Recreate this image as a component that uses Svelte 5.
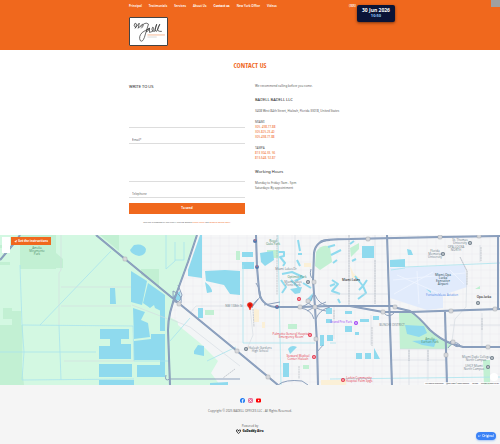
<script>
  const nav = ["Principal", "Testimonials", "Services", "About Us", "Contact us", "New York Office", "Videos"];
  const miami = ["305. 498.77.88", "305.825.23.40", "305.498.77.88"];
  const tampa = ["813 304.33. 56", "813.648. 92.87"];

  const highways = [
    "M197 0L188 27L177 57Q168 78 168 95L170 150",
    "M96 0L125 24L170 61L237 116L278 150",
    "M256 0L257 32L259 55Q260 70 275 72L300 72L330 71L393 71",
    "M350 71L383 77L410 77L500 74",
    "M393 72L410 76Q418 81 430 95Q440 104 450 108L463 112L500 112",
    "M330 5Q316 5 314 18L313 45L315 72L317 108L318 150",
    "M387 0L389 62L392 150",
    "M320 7Q324 4 350 4L440 2L500 1",
    "M445 77L447 150",
    "M498 0L498 75",
    "M0 25L16 6L20 0"
  ];

  const ramps = [
    "M256 48Q262 58 260 62L252 72M258 64Q253 68 252 73M264 70L280 67",
    "M300 72Q311 70 313 60M315 60Q319 70 330 71M300 73Q311 74 314 84M316 84Q319 75 330 72M307 67Q315 74 326 76M307 76Q318 70 326 67",
    "M311 34Q309 41 313 44M317 117Q324 109 322 111",
    "M173 56Q183 60 181 68Q172 70 173 56M178 50L182 60Q180 70 172 66",
    "M166 140Q164 147 170 144L240 144M278 150Q285 144 302 146L308 150",
    "M384 78Q389 84 395 77M450 106Q457 115 460 110Q454 104 448 113"
  ];

  const water = [
    "M131 36L147 46L142 70L131 67Z",
    "M148 48L165 60V78L155 73L154 70L150 73L143 68Z",
    "M133 73L145 77L141 85L148 88L150 102L134 104Z",
    "M134 106L151 104V99H165V125H134Z",
    "M100 94H129V104H121V109H131V124H99V111H110V104H100Z",
    "M99 129H132V142H99ZM137 130H165V142H137ZM99 145H134V150H99Z",
    "M110 53H115L116 69H110Z",
    "M130 15L134 10Q143 8 146 14Q146 20 139 21Q131 19 130 15Z",
    "M200 0H202V43L188 41V35Z",
    "M205 36L225 35L240 36V60L230 59L224 50L206 46Z",
    "M205 47Q212 52 212 57L207 58Z",
    "M242 17H253V22H242ZM242 27H254V34H242Z",
    "M260 18L273 16L274 25L265 31L261 27Z",
    "M160 63H165V96H160ZM160 120H165V134H160Z",
    "M198 73H203V83H198Z",
    "M194 116L198 110L204 111V121L194 119Z",
    "M172 62L180 56L181 65L174 66Z",
    "M283 128H289V142H283ZM326 73H332V79H326ZM326 84H332V88H326Z",
    "M210 148L228 147V150H210ZM288 114Q291 109 297 112L290 119Z",
    "M290 54L302 52L300 58L295 59ZM306 65L313 58L312 66Z",
    "M362 11H374V23H362ZM407 14L411 15L413 20H408ZM390 25L405 24V32H390Z",
    "M356 118H362V124H356ZM365 118H371V124H365ZM374 113L380 124H374Z",
    "M345 76H352V79H345ZM360 84H369V87H360ZM373 81H379V85H373Z",
    "M320 100H324V111H320ZM327 100H333V106H327ZM345 91H352V97H345ZM355 97H359V100H355Z",
    "M405 90L424 91L427 98L419 102L407 99ZM412 106L437 104L434 112L422 110Z",
    "M426 54L431 56V58Z"
  ];

  const ponds = [
    "M278 17L284 17V21L280 22L285 28L283 31",
    "M298 5L300 16M298 19H302M297 25L300 31M282 39L292 37L303 42L295 46",
    "M281 45L286 52L282 58M291 45L300 54M303 48L311 53",
    "M328 12L335 10M331 20L341 15M333 28L337 25M350 9L354 6M352 26L356 24",
    "M332 45L338 49L332 56L340 59M335 49L330 51M338 64L340 68",
    "M355 41L363 51L359 55M363 51L366 58L358 64M363 51L367 45"
  ];

  const parks = [
    "M20 0H56V34H20ZM56 18L63 24V33H56Z",
    "M0 90L23 90L22 132L24 150H0Z",
    "M3 73H12V76H21V90H12V84H3ZM0 10H10V13H0ZM0 27H10V30H0Z",
    "M100 0H119V16ZM141 34H159V51L141 40Z",
    "M267 15H279V23H267ZM236 16H240V25H236ZM205 75H214V80H205Z",
    "M316 17Q322 8 330 12L332 27L320 35L315 31Z",
    "M350 13L359 8V14L351 22Z",
    "M399 78H413L430 95L452 110L447 114H400Z",
    "M288 89H297V94H288ZM475 54L480 51V54ZM483 125H490V150H484ZM303 130H309V134H303Z"
  ];

  const canals = "M20 30L22 90L133 91L134 126H168M22 90L24 117L22 145L134 144M59 90L61 145M0 117H96M111 16L40 90M166 0V34L175 26V7M243 30V108M278 0L281 150M243 108H315M405 32L500 28M391 35L405 33M330 108L336 108M330 144L500 142M184 7V25H175M170 106L190 83M207 126L236 112";

  const shields = [
    [125, 24], [179, 69], [237, 116], [268, 142], [300, 72], [308, 66], [314, 47], [315, 72], [316, 104],
    [368, 4], [440, 2], [479, 1], [395, 72], [383, 77], [451, 76], [495, 74], [453, 107], [446, 120], [488, 112]
  ];

  const places = [
    { x: 37, y: 14, lines: ["Amelia", "Miramonte", "Park"], tone: "green" },
    { x: 273, y: 7, lines: ["Royal", "Oaks Park"], tone: "green" },
    { x: 297, y: 43, lines: ["Optimist Park"], tone: "green" },
    { x: 293, y: 48, lines: ["Miami Lakes", "Picnic Park"], tone: "gray" },
    { x: 291, y: 100, lines: ["Palmetto General Hospital", "Emergency Room"], tone: "red" },
    { x: 298, y: 122, lines: ["Steward Medical", "Center Hialeah"], tone: "red" },
    { x: 260, y: 114, lines: ["Hialeah Gardens", "High School"], tone: "gray" },
    { x: 351, y: 46, lines: ["Miami Lakes"], tone: "dark" },
    { x: 341, y: 88, lines: ["Grand Prix Park"], tone: "purple" },
    { x: 359, y: 144, lines: ["Larkin Community", "Hospital Palm Spgs"], tone: "red" },
    { x: 460, y: 6, lines: ["St. Thomas", "University"], tone: "gray" },
    { x: 435, y: 17, lines: ["Florida", "Memorial", "University"], tone: "gray" },
    { x: 456, y: 13, lines: ["OPA-LOCKA", "NORTH"], tone: "gray" },
    { x: 443, y: 41, lines: ["Miami-Opa", "Locka", "Executive", "Airport"], tone: "slate" },
    { x: 442, y: 61, lines: ["Fontainebleau Aviation"], tone: "blue" },
    { x: 484, y: 63, lines: ["Opa-locka"], tone: "dark" },
    { x: 392, y: 91, lines: ["BUNCHE DISTRICT"], tone: "gray" },
    { x: 430, y: 105, lines: ["Amelia", "Earhart Park"], tone: "green" },
    { x: 476, y: 123, lines: ["Miami Dade College", "North Campus"], tone: "gray" },
    { x: 474, y: 132, lines: ["UHCF Miami", "North Campus"], tone: "gray" },
    { x: 234, y: 72, lines: ["NW 138th St"], tone: "gray" },
    { x: 286, y: 35, lines: ["Miami Lakes Dr"], tone: "gray" }
  ];

  const markers = [
    [299, 64, "red"], [310, 100, "red"], [314, 122, "red"], [343, 145, "red"], [356, 88, "purple"],
    [246, 114, "gray"], [308, 47, "gray"], [443, 19, "gray"], [470, 8, "gray"], [478, 68, "gray"], [492, 123, "gray"], [488, 132, "gray"]
  ];
</script>

<header class="site-header">
  <div class="wrap">
    <div class="top-row">
      <nav>
        {#each nav as item}
          <a href="#top" class:active={item === "Contact us"}>{item}</a>
        {/each}
      </nav>
      <a class="phone" href="#call">(305)</a>
    </div>
    <a class="logo" href="#top" aria-label="Badell">
      <svg viewBox="0 0 36 26">
        <path d="M5 9Q3 7 5 5Q7 5 6 8L5 10L9 5L8 10L12 6Q14 7 11 10M10 9Q15 3 18 6Q16 12 14 19Q12 24 10 22Q8 18 12 14Q15 12 19 10Q15 12 16 13.500Q18 13 19 10L19 14L22 13Q24 9 22 9Q20 13 24 13L26 6Q23 13 26 13L29 6Q25 13 29 13L31 13" />
        <path class="accent" d="M17 16.500H34" />
        <path class="thin" d="M17 18.500H26" />
      </svg>
    </a>
  </div>
  <div class="clock">
    <strong>30 Jun 2026</strong>
    <span>10:50</span>
  </div>
  <div class="corner"></div>
</header>

<main>
  <h1>CONTACT US</h1>
  <div class="wrap columns">
    <form>
      <h2>WRITE TO US</h2>
      <input class="name" aria-label="Name" />
      <input type="email" placeholder="Email*" aria-label="Email" />
      <textarea aria-label="Message"></textarea>
      <input type="tel" placeholder="Telephone" aria-label="Telephone" />
      <button type="button" class="send">To send</button>
      <p class="legal">
        This site is protected by reCAPTCHA and the Google <a href="#privacy">Privacy Policy</a> and <a href="#terms">Terms of Service apply.</a>
      </p>
    </form>

    <section class="info">
      <p>We recommend calling before you come.</p>
      <h2>BADELL BADELL LLC</h2>
      <p>3408 West 84th Street, Hialeah, Florida 33018, United States</p>
      <div class="phones">
        <p>MIAMI</p>
        {#each miami as number}
          <a href="#call">{number}</a>
        {/each}
      </div>
      <div class="phones">
        <p>TAMPA</p>
        {#each tampa as number}
          <a href="#call">{number}</a>
        {/each}
      </div>
      <h2>Working Hours</h2>
      <p>Monday to Friday: 9am - 5pm</p>
      <p>Saturdays: By appointment</p>
    </section>
  </div>
</main>

<section class="map">
  <svg viewBox="0 0 500 150" preserveAspectRatio="xMidYMid slice">
    <defs>
      <pattern id="streets" width="9" height="8" patternUnits="userSpaceOnUse">
        <path d="M0 3H9M4 0V8" stroke="#eaedf0" stroke-width=".5" />
      </pattern>
    </defs>
    <rect width="500" height="150" fill="#f5f6f7" />
    <rect width="500" height="150" fill="url(#streets)" />
    <path class="land" d="M0 0H197L188 27L177 57L169 82L190 92L214 112L230 126L235 135L220 150H0Z" />
    <path class="urban" d="M176 66L237 116L278 150H220L211 138L218 126L200 108L178 90Z" />
    <path class="airport" d="M390 33L465 30L467 52L443 60V73L427 75L390 63Z" />
    <path class="runway" d="M393 45L465 38M417 36L419 69M397 40L443 60M394 59L433 37M450 35L464 49" />
    {#each parks as d}
      <path class="park" {d} />
    {/each}
    <path class="sand" d="M304 28H311V32H304ZM254 73L259 75V87H254ZM262 87H265V93H262ZM350 31L354 39L360 43H352ZM321 145H346V150H321Z" />
    {#each water as d}
      <path class="water" {d} />
    {/each}
    {#each ponds as d}
      <path class="pond" {d} />
    {/each}
    <path class="canal" d={canals} />
    <path class="street" d="M61 0V35L59 38V90M61 52H131M61 71H131M64 126H134M132 70L168 84M190 78L196 71H250M250 72L253 100L247 114M170 84L190 92L240 131M295 0V35M349 0V70M375 0V69M334 71V104M371 80V110M460 22L467 36L466 72L455 84L452 106M480 10V27M482 78V112M409 114V150M428 114V145M400 114L450 114M330 59H388M392 125H445M450 90H500" />
    <path class="avenue" d="M277 0V60M253 74L254 92M349 0V70M375 25V69M334 75V84M372 92V111M460 22L467 36V50M481 12V26M482 83V95M299 131V144M235 134L223 143M409 115V126M428 115V126" />
    {#each highways as d}
      <path class="highway" {d} />
      <path class="highway-line" {d} />
    {/each}
    {#each ramps as d}
      <path class="ramp" {d} />
    {/each}
    {#each shields as [x, y]}
      <rect class="shield" x={x - 2} y={y - 2} width="4" height="4" rx="1" />
    {/each}
    {#each [[255, 6], [257, 32], [277, 72]] as [x, y]}
      <circle cx={x} cy={y} r="2" fill="#5579ad" />
      <path d="M{x - 1} {y - 1}h2" stroke="#d9717c" stroke-width="1" />
    {/each}
    {#each places as place}
      <text class={place.tone} x={place.x} y={place.y}>
        {#each place.lines as line, i}
          <tspan x={place.x} y={place.y + i * 3}>{line}</tspan>
        {/each}
      </text>
    {/each}
    {#each markers as [x, y, tone]}
      <circle class={tone} cx={x} cy={y} r="2" />
      <circle cx={x} cy={y} r=".8" fill="#fff" />
    {/each}
    <path d="M250 75Q249 72 248 71.500Q247 70 247.500 69Q248 67.500 250 67.500Q252 67.500 252.500 69Q253 70 252 71.500Q251 72 250 75Z" fill="#e91b0c" stroke="#e91b0c" stroke-width=".5" />
    <circle cx="250" cy="70" r=".8" fill="#8f1410" />
    <circle cx="494" cy="142" r="4" fill="#fff" />
  </svg>
  <div class="map-tools">
    <span class="map-control"></span>
    <a class="directions" href="#directions">
      <svg viewBox="0 0 6 6"><path d="M0 3L6 0L4 6L3 3.500Z" fill="#fff" /></svg>
      Get the instructions
    </a>
  </div>
  <div class="map-credit">
    <span>Keyboard shortcuts</span><span>Map data ©2026 Google</span><span>Terms</span><span>Report a map error</span>
  </div>
</section>

<footer>
  <div class="social">
    <a href="#facebook" aria-label="Facebook">
      <svg viewBox="0 0 10 10"><circle cx="5" cy="5" r="5" fill="#1877f2" /><path d="M4.300 10V6.400H3V5H4.300V4Q4.300 2 6.200 2H7.200V3.300H6.500Q5.800 3.300 5.800 4V5H7.200L7 6.400H5.800V10Z" fill="#fff" /></svg>
    </a>
    <a href="#instagram" aria-label="Instagram">
      <svg viewBox="0 0 10 10" fill="none" stroke="#e13b78" stroke-width="1.600"><rect x=".8" y=".8" width="8.400" height="8.400" rx="2.500" /><circle cx="5" cy="5" r="2" /><circle cx="7.500" cy="2.500" r=".2" /></svg>
    </a>
    <a href="#youtube" aria-label="YouTube">
      <svg viewBox="0 0 10 10"><rect y="1" width="10" height="8" rx="2" fill="#f00" /><path d="M4 3L7 5L4 7Z" fill="#fff" /></svg>
    </a>
  </div>
  <p>Copyright © 2025 BADELL OFFICES LLC - All Rights Reserved.</p>
  <p class="powered">Powered by</p>
  <a class="godaddy" href="#godaddy">
    <svg viewBox="0 0 10 10" fill="none" stroke="#111" stroke-width="1.500"><path d="M5 9Q0 6 1 2Q3 0 6 4M5 9Q10 6 9 2Q7 0 4 5" /></svg>
    GoDaddy Airo
  </a>
</footer>

<button type="button" class="original">↩ Original</button>

<style>
  :global(body) {
    background: #f5f5f5;
    color: #5a5a5a;
    font: 3px/5px "Open Sans", sans-serif;
  }

  p,
  h1,
  h2 {
    margin: 0;
  }

  a {
    color: #f0681d;
    text-decoration: none;
  }

  svg {
    display: block;
  }

  .wrap {
    max-width: 242px;
    margin: 0 auto;
  }

  .site-header {
    position: relative;
    box-sizing: border-box;
    min-height: 50px;
    padding-top: 4px;
    background: #f0681d;
  }

  .top-row {
    display: flex;
    justify-content: space-between;
    padding-right: 15px;
  }

  nav {
    display: flex;
    gap: 7px;
  }

  nav a,
  .phone {
    color: #fff;
    font-family: "Noto Sans", sans-serif;
    font-weight: 600;
    white-space: nowrap;
  }

  nav .active {
    font-weight: 800;
  }

  .logo {
    display: block;
    box-sizing: border-box;
    width: 39px;
    margin-top: 8px;
    border: 1px solid #444;
    border-radius: 1px;
    background: #fff;
  }

  .logo path {
    fill: none;
    stroke: #333;
    stroke-width: 0.7;
  }

  .logo .accent {
    stroke: #f2a070;
  }

  .logo .thin {
    stroke: #ccc;
  }

  .clock {
    position: absolute;
    top: 5px;
    right: 105px;
    display: flex;
    flex-direction: column;
    align-items: center;
    box-sizing: border-box;
    width: 38px;
    height: 17px;
    padding-top: 2px;
    border-radius: 2px;
    background: #0b1437;
    box-shadow: 0 1px 3px rgba(0, 0, 0, 0.5);
    color: #fff;
    font-size: 5px;
    line-height: 6px;
    white-space: nowrap;
  }

  .clock span {
    color: #90caf9;
    font-size: 4px;
    font-weight: 700;
  }

  .corner {
    position: absolute;
    top: 0;
    right: 0;
    width: 9px;
    height: 7px;
    background: #a0a0a0;
  }

  main {
    padding: 10px 0;
    background: #fff;
  }

  h1 {
    color: #f0681d;
    font: bold 7px/12px "Open Sans Condensed", "Roboto Condensed", "Liberation Sans Narrow", sans-serif;
    text-align: center;
  }

  .columns {
    display: grid;
    grid-template-columns: 116px 1fr;
    gap: 10px;
    padding-top: 12px;
    font-family: "Noto Sans", sans-serif;
  }

  h2 {
    color: #222;
    font-size: 4px;
    font-weight: 400;
    line-height: 6px;
  }

  form {
    display: flex;
    flex-direction: column;
  }

  input,
  textarea {
    box-sizing: border-box;
    width: 100%;
    height: 8px;
    margin: 0 0 8px;
    padding: 0 3px;
    border: 0;
    border-bottom: 1px solid #ddd;
    border-radius: 0;
    outline: 0;
    background: #fff;
    font: inherit;
    resize: none;
  }

  .name {
    height: 38px;
  }

  textarea {
    height: 30px;
  }

  input[type="tel"] {
    margin-bottom: 5px;
  }

  input::placeholder {
    color: #666;
  }

  .send {
    height: 11px;
    padding: 0;
    border: 0;
    background: #f0681d;
    color: #fff;
    font: 700 3px/5px "Open Sans", sans-serif;
  }

  .legal {
    margin-top: 6px;
    font-size: 2px;
    text-align: center;
  }

  .info h2 {
    margin: 8px 0 6px;
  }

  .phones {
    margin-top: 6px;
  }

  .phones a {
    display: block;
  }

  .map {
    position: relative;
  }

  .map > svg {
    width: 100%;
    height: 150px;
  }

  .map > svg path {
    stroke-linejoin: round;
  }

  .land {
    fill: #d3f8e2;
  }

  .urban {
    fill: #f3f5f6;
  }

  .airport {
    fill: #e1ebfc;
  }

  .park {
    fill: #c2f0d3;
  }

  .sand {
    fill: #fbf0d7;
  }

  .water {
    fill: #8fdaee;
  }

  .runway,
  .pond,
  .canal,
  .street,
  .avenue,
  .highway,
  .highway-line,
  .ramp {
    fill: none;
  }

  .runway {
    stroke: #f0f5ff;
    stroke-width: 0.8;
  }

  .pond {
    stroke: #8fdaee;
    stroke-width: 2;
  }

  .canal {
    stroke: #a9e3ee;
    stroke-width: 0.8;
  }

  .street {
    stroke: #d3dae1;
    stroke-width: 0.6;
  }

  .avenue {
    stroke: #9ba3ad;
    stroke-width: 1;
    stroke-dasharray: 2 0.5;
    opacity: 0.5;
  }

  .highway {
    stroke: #8298b8;
    stroke-width: 2;
  }

  .highway-line {
    stroke: #a9b9d0;
    stroke-width: 0.4;
  }

  .ramp {
    stroke: #8da1bd;
    stroke-width: 1;
  }

  .shield {
    fill: #d6d8dc;
    stroke: #a4a8ad;
    stroke-width: 0.5;
  }

  .map text {
    font-size: 3px;
    text-anchor: middle;
  }

  .green {
    fill: #4a8c69;
  }

  .gray {
    fill: #6f7e89;
  }

  .dark {
    fill: #333;
    font-weight: 600;
  }

  .slate {
    fill: #4f6d7a;
    font-weight: 600;
  }

  .red {
    fill: #e5364c;
  }

  .purple {
    fill: #a142f4;
  }

  .blue {
    fill: #4c86e8;
  }

  .map-tools {
    position: absolute;
    top: 2px;
    left: 2px;
    display: flex;
    align-items: flex-start;
    gap: 1px;
  }

  .map-control {
    width: 8px;
    height: 16px;
    background: #fff;
  }

  .directions {
    display: flex;
    align-items: center;
    gap: 1px;
    height: 8px;
    padding: 0 3px;
    background: #f0681d;
    color: #fff;
    font-weight: 700;
    white-space: nowrap;
  }

  .directions svg {
    width: 3px;
    height: 3px;
  }

  .map-credit {
    position: absolute;
    right: 0;
    bottom: 0;
    display: flex;
    gap: 3px;
    padding: 0 1px;
    background: rgba(255, 255, 255, 0.7);
    color: #222;
    font-size: 2px;
    line-height: 3px;
  }

  footer {
    display: flex;
    flex-direction: column;
    align-items: center;
    padding: 13px 0 9px;
  }

  .social {
    display: flex;
    gap: 3px;
    margin-bottom: 6px;
  }

  .social svg {
    width: 5px;
    height: 5px;
  }

  .powered {
    margin-top: 10px;
  }

  .godaddy {
    display: flex;
    align-items: center;
    gap: 1px;
    color: #111;
    font-weight: 800;
  }

  .godaddy svg {
    width: 5px;
    height: 5px;
  }

  .original {
    position: fixed;
    right: 4px;
    bottom: 4px;
    width: 20px;
    height: 8px;
    padding: 0;
    border: 0;
    border-radius: 4px;
    background: #3b82f6;
    box-shadow: 0 1px 2px rgba(59, 130, 246, 0.4);
    color: #fff;
    font: 600 3px/5px "Open Sans", sans-serif;
  }
</style>
